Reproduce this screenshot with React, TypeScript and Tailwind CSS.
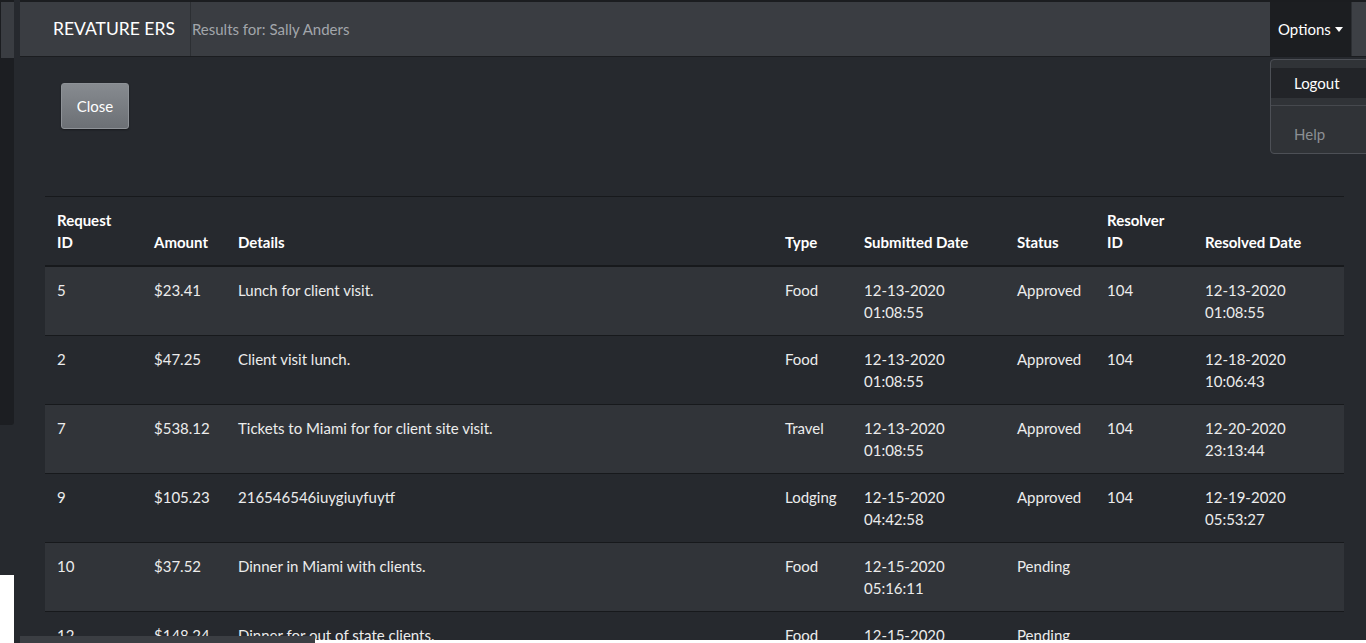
import React from "react";

type Reimb = {
  id: number;
  amount: string;
  details: string;
  type: string;
  submitted: [string, string];
  status: string;
  resolver?: number;
  resolved?: [string, string];
};

const rows: Reimb[] = [
  { id: 5, amount: "$23.41", details: "Lunch for client visit.", type: "Food", submitted: ["12-13-2020", "01:08:55"], status: "Approved", resolver: 104, resolved: ["12-13-2020", "01:08:55"] },
  { id: 2, amount: "$47.25", details: "Client visit lunch.", type: "Food", submitted: ["12-13-2020", "01:08:55"], status: "Approved", resolver: 104, resolved: ["12-18-2020", "10:06:43"] },
  { id: 7, amount: "$538.12", details: "Tickets to Miami for for client site visit.", type: "Travel", submitted: ["12-13-2020", "01:08:55"], status: "Approved", resolver: 104, resolved: ["12-20-2020", "23:13:44"] },
  { id: 9, amount: "$105.23", details: "216546546iuygiuyfuytf", type: "Lodging", submitted: ["12-15-2020", "04:42:58"], status: "Approved", resolver: 104, resolved: ["12-19-2020", "05:53:27"] },
  { id: 10, amount: "$37.52", details: "Dinner in Miami with clients.", type: "Food", submitted: ["12-15-2020", "05:16:11"], status: "Pending" },
  { id: 12, amount: "$148.24", details: "Dinner for out of state clients.", type: "Food", submitted: ["12-15-2020", "05:16:11"], status: "Pending" },
];

const App = () => {
  return (
    <div className="relative flex h-[643px] w-full overflow-hidden bg-[#26292e] font-['Lato','Liberation_Sans',sans-serif] text-[15px] leading-[22px] text-[#ececec]">
      {/* page behind the modal, left edge */}
      <aside className="flex w-[14px] shrink-0 flex-col">
        <div className="h-[2px] shrink-0 bg-[#1b1d20]" />
        <div className="h-[56px] shrink-0 border-l border-[#1b1d20] bg-[#3a3d42]" />
        <div className="h-[367px] shrink-0 rounded-br-[3px] bg-[#1c1e22]" />
        <div className="flex-1" />
        <div className="h-[68px] shrink-0 bg-white" />
      </aside>

      <div className="min-w-0 flex-1">
        <nav className="ml-[6px] flex h-[57px] border-t-2 border-b border-[#1b1d20] bg-[#3a3d42]">
          <div className="flex items-center border-r border-[#2c2f33] pl-[33px] pr-[15px] text-[17.5px] text-white">
            REVATURE ERS
          </div>
          <div className="flex flex-1 items-center pl-[1px] text-[15px] text-[#a2a6ab]">
            Results for: Sally Anders
          </div>
          <button className="flex w-[81px] items-center gap-[4px] bg-[#1c1e21] pl-[8px] text-[15px] text-white">
            Options
            <span className="mt-[1px] border-x-[4px] border-t-[5px] border-x-transparent border-t-white" />
          </button>
          <div className="w-[15px] border-l border-[#2c2f33] bg-[#3d4045]" />
        </nav>

        <div className="relative">
          <div className="absolute top-[2px] right-[-8px] w-[104px] rounded-[4px] border border-[#4d5056] bg-[#303337] pt-[8px] pb-[6px]">
            <div className="bg-[#222428] py-[4px] pl-[23px] text-white">Logout</div>
            <div className="my-[7px] h-px bg-[#46494e]" />
            <div className="pt-[10px] pb-[2px] pl-[23px] text-[#8b8f94]">Help</div>
          </div>
        </div>

        <div className="pl-[47px] pt-[26px]">
          <button className="h-[46px] w-[68px] rounded-[3px] border border-[#8e9297] bg-gradient-to-b from-[#878b90] to-[#6c7075] text-[15px] text-white shadow-[0_1px_2px_rgba(0,0,0,0.4)]">
            Close
          </button>
        </div>

        <table className="mt-[67px] ml-[31px] w-[1299px] table-fixed border-collapse border-t border-[#17191c]">
          <colgroup>
            <col className="w-[97px]" />
            <col className="w-[84px]" />
            <col className="w-[547px]" />
            <col className="w-[79px]" />
            <col className="w-[153px]" />
            <col className="w-[90px]" />
            <col className="w-[98px]" />
            <col className="w-[151px]" />
          </colgroup>
          <thead>
            <tr className="border-b-2 border-[#17191c] text-left align-bottom font-bold text-white">
              <th className="px-[12px] py-[12px]">Request ID</th>
              <th className="px-[12px] py-[12px]">Amount</th>
              <th className="px-[12px] py-[12px]">Details</th>
              <th className="px-[12px] py-[12px]">Type</th>
              <th className="px-[12px] py-[12px]">Submitted Date</th>
              <th className="px-[12px] py-[12px]">Status</th>
              <th className="px-[12px] py-[12px]">Resolver ID</th>
              <th className="px-[12px] py-[12px]">Resolved Date</th>
            </tr>
          </thead>
          <tbody>
            {rows.map((r, i) => (
              <tr
                key={r.id}
                className={`h-[69px] border-b border-[#17191c] align-top ${i % 2 === 0 ? "bg-[#313439]" : "bg-[#26292e]"}`}
              >
                <td className="px-[12px] py-[12px]">{r.id}</td>
                <td className="px-[12px] py-[12px]">{r.amount}</td>
                <td className="px-[12px] py-[12px]">{r.details}</td>
                <td className="px-[12px] py-[12px]">{r.type}</td>
                <td className="px-[12px] py-[12px]">
                  {r.submitted[0]}
                  <br />
                  {r.submitted[1]}
                </td>
                <td className="px-[12px] py-[12px]">{r.status}</td>
                <td className="px-[12px] py-[12px]">{r.resolver ?? ""}</td>
                <td className="px-[12px] py-[12px]">
                  {r.resolved ? (
                    <>
                      {r.resolved[0]}
                      <br />
                      {r.resolved[1]}
                    </>
                  ) : null}
                </td>
              </tr>
            ))}
          </tbody>
        </table>
      </div>

      {/* strip of the window behind, over the bottom of the table */}
      <div className="absolute bottom-0 left-[14px] right-0 flex h-[7px]">
        <div className="w-[6px] bg-[#26292e]" />
        <div className="w-[295px] bg-[#3b3e43]" />
        <div className="flex flex-1 flex-col">
          <div className="h-[4px]" />
          <div className="flex-1 bg-white" />
        </div>
      </div>
    </div>
  );
};

export default App;
